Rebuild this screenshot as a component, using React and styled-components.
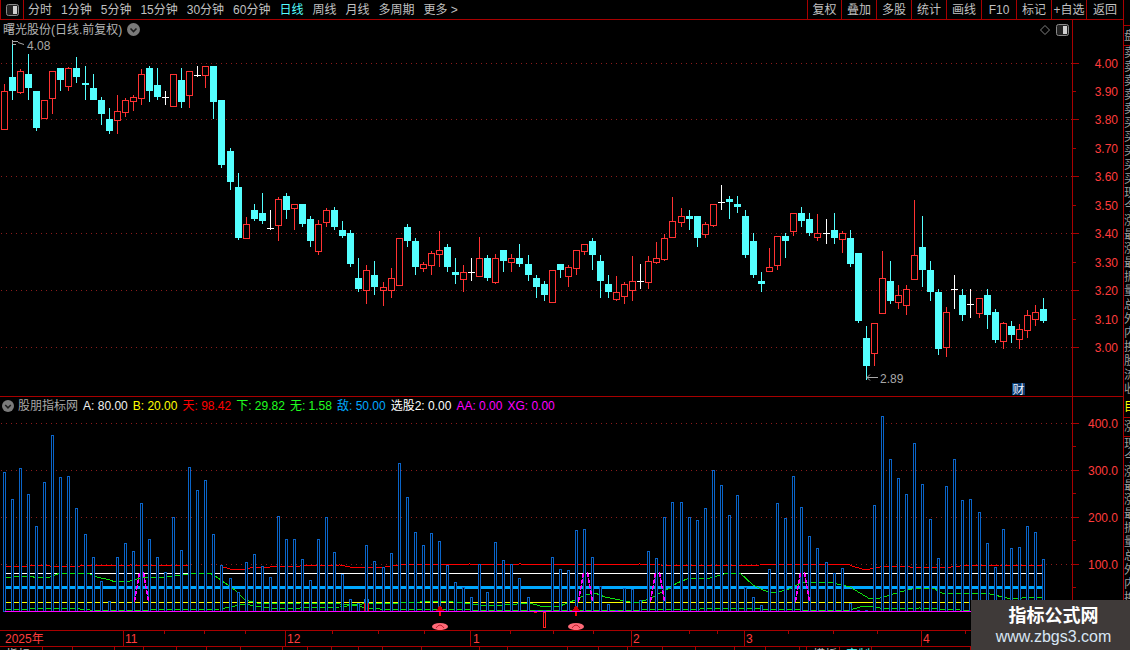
import React from "react";
import styled, { createGlobalStyle } from "styled-components";

const LINE = "#a80000";
const AXIS_RED = "#ff3c3c";

// t, high, bodyTop, bodyBottom, low (all in page pixels)
const candles = [
  ["r",84,91,129,129],["c",40,77,91,100],["r",69,71,92,94],["c",54,74,88,100],["c",91,91,128,131],
  ["r",100,100,118,119],["r",71,71,98,114],["c",68,68,80,91],["r",67,68,86,91],["c",57,68,77,83],
  ["c",66,83,85,100],["c",74,88,100,100],["c",97,100,114,125],["c",108,119,131,134],["r",95,111,120,134],
  ["r",98,100,112,117],["r",95,97,101,111],["r",69,74,98,105],["c",66,68,91,102],["c",68,85,97,100],
  ["w",91,97,97,105],["r",74,74,106,106],["c",68,80,102,108],["r",71,71,95,108],["w",66,75,75,77],
  ["r",66,66,75,88],["c",66,66,102,119],["c",100,100,165,168],["c",148,151,182,190],["c",173,187,238,240],
  ["r",217,224,238,239],["c",204,210,219,221],["c",193,213,221,224],["w",210,228,228,230],["r",197,199,225,241],
  ["c",193,196,210,219],["r",204,204,208,230],["c",204,204,224,227],["c",216,219,241,247],["r",220,224,251,255],
  ["r",208,210,222,227],["c",207,210,227,230],["c",221,230,236,238],["c",230,233,264,267],["c",258,278,289,292],
  ["r",265,270,290,304],["c",261,275,287,295],["r",282,287,290,306],["r",268,278,290,298],["r",238,238,285,285],
  ["c",224,227,241,247],["c",238,241,267,275],["r",262,264,268,272],["r",251,253,265,275],["r",231,250,254,267],
  ["c",244,247,267,272],["c",258,272,275,284],["r",265,272,279,292],["w",258,272,272,281],["r",237,258,276,276],
  ["c",255,258,278,281],["r",254,258,282,284],["c",250,250,261,272],["r",254,258,262,272],["c",244,258,264,267],
  ["c",255,264,275,281],["c",275,278,287,298],["c",281,284,295,301],["r",270,270,302,302],["c",264,264,270,278],
  ["r",265,267,276,287],["r",250,250,268,275],["r",244,244,251,255],["c",238,241,255,270],["c",255,261,281,298],
  ["c",275,284,292,298],["r",276,292,299,301],["r",282,284,296,304],["r",256,281,290,301],["w",264,281,281,289],
  ["r",256,261,282,289],["r",242,258,262,264],["r",234,238,259,261],["r",197,221,237,238],["r",208,216,222,227],
  ["c",210,216,219,230],["c",216,216,238,247],["r",222,224,234,238],["r",204,204,225,227],["w",185,202,202,210],
  ["c",196,199,202,219],["c",196,204,207,213],["c",210,216,255,258],["c",233,241,275,278],["c",272,281,284,292],
  ["r",248,267,271,272],["r",236,236,265,270],["c",233,236,241,258],["r",213,213,231,236],["c",207,213,221,227],
  ["c",213,219,233,236],["r",214,233,237,241],["w",219,233,233,244],["c",213,230,238,244],["r",231,233,239,253],
  ["c",230,238,264,267],["c",253,253,321,323],["c",326,338,366,380],["r",323,323,353,366],["r",251,278,313,313],
  ["c",261,281,301,304],["r",285,295,302,309],["r",285,289,305,315],["r",200,255,279,279],["c",216,247,270,287],
  ["c",261,270,292,301],["c",289,292,349,355],["r",307,312,347,357],["w",275,289,289,309],["c",289,295,315,321],
  ["w",289,304,304,318],["r",298,298,313,318],["c",289,295,315,329],["c",309,312,340,343],["r",322,323,341,349],
  ["c",321,326,335,343],["r",324,329,339,349],["r",310,315,330,338],["r",305,312,319,326],["c",298,309,321,323],
];

const barTops = [
  472,499,468,494,526,482,435,477,476,508,534,557,581,601,557,543,551,503,539,557,572,517,550,467,490,480,534,565,578,592,
  562,554,566,577,516,539,539,559,580,539,517,552,574,599,603,545,561,567,553,463,497,532,545,533,541,565,582,587,597,564,
  592,542,560,564,578,597,610,610,557,569,570,530,529,557,586,604,610,588,589,600,551,558,517,502,502,517,520,508,470,485,
  515,495,587,597,605,569,503,518,476,507,536,548,562,573,568,603,610,610,505,416,459,478,494,443,484,519,558,486,459,500,
  499,512,543,567,529,548,547,526,532,559,
];

const upperGreen = [
  [6,578],[13,577],[30,576],[37,578],[50,577],[60,573],[90,574],[97,577],[110,580],[115,582],[130,581],[140,578],[150,577],
  [165,577],[190,574],[210,573],[218,578],[225,583],[235,590],[245,600],[257,603],[300,603],[340,604],[355,605],[370,603],
  [400,603],[440,601],[465,603],[470,604],[490,606],[530,603],[540,606],[560,606],[575,600],[585,595],[595,593],[605,597],
  [620,600],[635,603],[650,599],[660,593],[670,588],[677,583],[687,579],[710,578],[727,573],[740,573],[753,585],[763,590],
  [773,593],[787,590],[803,582],[818,582],[833,583],[850,587],[860,593],[870,599],[880,598],[890,595],[900,592],[912,589],
  [933,588],[942,593],[957,594],[977,593],[990,594],[1007,598],[1017,599],[1027,597],[1043,597],
];

const lowerGreen = [
  [6,609],[30,609],[50,608],[80,609],[90,610],[110,610],[150,610],[220,609],[235,606],[245,604],[255,606],[270,608],
  [300,608],[340,607],[355,605],[365,608],[380,609],[410,610],[440,609],[470,610],[520,610],[560,610],[600,610],[640,610],
  [665,609],[700,609],[720,608],[760,609],[800,610],[830,610],[850,610],[860,607],[870,606],[885,609],[920,608],[960,610],
  [1000,610],[1043,610],
];

const redLine = [
  [6,566],[20,566],[24,567],[35,565],[50,566],[80,566],[90,565],[100,566],[130,565],[190,566],[220,566],[230,569],[240,570],
  [250,568],[270,567],[300,566],[340,565],[350,567],[360,568],[385,567],[400,565],[470,564],[480,565],[520,564],[560,565],
  [640,564],[660,565],[700,566],[760,565],[803,564],[847,564],[855,567],[866,570],[875,568],[885,566],[910,567],[935,567],
  [942,568],[960,566],[1000,565],[1043,565],
];

const pulses = [134, 578, 650, 795];
const gridPrice = [63, 119, 176, 233, 290, 347];
const gridIndicator = [423, 470, 517, 564];

const priceLabels = [
  ["4.00",63],["3.90",91],["3.80",119],["3.70",148],["3.60",176],["3.50",205],["3.40",233],["3.30",262],["3.20",290],["3.10",319],["3.00",347],
];
const indicatorLabels = [["400.0",423],["300.0",470],["200.0",517],["100.0",564]];

const periods = ["分时","1分钟","5分钟","15分钟","30分钟","60分钟","日线","周线","月线","多周期","更多 >"];
const tools = [["复权",34],["叠加",35],["多股",35],["统计",35],["画线",35],["F10",35],["标记",35],["+自选",35],["返回",37]];

const legend = [
  ["A:","80.00","#f0f0f0"],["B:","20.00","#ffff00"],["天:","98.42","#ff0000"],["下:","29.82","#20ff20"],["无:","1.58","#20ff20"],
  ["敌:","50.00","#00a8ff"],["选股2:","0.00","#ffffff"],["AA:","0.00","#ff00ff"],["XG:","0.00","#ff00ff"],
];

const months = [["2025年",0,5],["11",123,125],["12",285,287],["1",470,473],["2",631,633],["3",744,746],["4",921,923]];
const minorTicks = [164,204,245,332,378,424,510,553,593,689,717,788,833,877,965,1005];
const tabWidths = [43,30,42,29,33,30,34,42,25,24,27,24,39,58,28,60,31,29,35,33,39,31,34,7,33,32,99];
const tabNames = { 0: "指标", 24: "模板", 25: "定制" };

const sideTop = ["卖五","卖四","卖三","卖二","卖一","买一","买二","买三","买四","买五","现价","今开","涨跌","最高","涨幅","最低","振幅","量比","总量","外盘","内盘","换手","股本","流通","收益"];
const sideBottom = ["现价","今开","涨跌","最高","涨幅","最低","振幅","量比","总量","外盘","内盘","换手","股本","流通","收益"];

const GlobalStyle = createGlobalStyle`
  html, body {
    margin: 0;
    background: #000;
  }
  body {
    font-family: "Liberation Sans", "Noto Sans CJK SC", sans-serif;
    font-size: 12px;
  }
`;

const Frame = styled.div`
  position: relative;
  display: flex;
  width: 1130px;
  height: 650px;
  overflow: hidden;
  background: #000;
`;

const Main = styled.div`
  display: flex;
  flex-direction: column;
  width: 1124px;
  height: 650px;
  border-right: 1px solid ${LINE};
  box-sizing: border-box;
`;

const Toolbar = styled.div`
  display: flex;
  align-items: center;
  height: 20px;
  flex: none;
  box-sizing: border-box;
  border-bottom: 1px solid ${LINE};
`;

const IconBox = styled.div`
  display: flex;
  align-items: center;
  justify-content: center;
  width: 24px;
  height: 19px;
  box-sizing: border-box;
  border-left: 1px solid ${LINE};
  border-right: 1px solid ${LINE};
`;

const Periods = styled.div`
  display: flex;
  gap: 9px;
  padding-left: 4px;
`;

const Period = styled.span`
  color: ${(p) => (p.$active ? "#54ffff" : "#c0c0c0")};
  white-space: pre;
  height: 19px;
  line-height: 21px;
`;

const Tools = styled.div`
  display: flex;
  margin-left: auto;
`;

const Tool = styled.div`
  width: ${(p) => p.$w}px;
  height: 19px;
  line-height: 21px;
  box-sizing: border-box;
  border-left: 1px solid ${LINE};
  color: #c0c0c0;
  text-align: center;
  white-space: nowrap;
`;

const Pane = styled.div`
  display: flex;
  flex: none;
  height: ${(p) => p.$h}px;
  box-sizing: border-box;
  border-bottom: ${(p) => (p.$ruled ? `1px solid ${LINE}` : "none")};
`;

const ChartColumn = styled.div`
  display: flex;
  flex-direction: column;
  width: 1072px;
`;

const PaneHeader = styled.div`
  display: flex;
  align-items: center;
  flex: none;
  height: ${(p) => p.$h}px;
  padding-left: ${(p) => p.$pad}px;
  padding-right: 3px;
`;

const StockTitle = styled.span`
  color: #b4b4b4;
  line-height: 16px;
  margin-right: 5px;
`;

const IndicatorTitle = styled.span`
  color: #a8a8a8;
  line-height: 16px;
  margin: 0 5px 0 4px;
`;

const HeaderRight = styled.div`
  display: flex;
  align-items: center;
  gap: 6px;
  margin-left: auto;
`;

const Legend = styled.div`
  display: flex;
  gap: 5px;
`;

const LegendItem = styled.span`
  color: ${(p) => p.$color};
  white-space: pre;
  line-height: 16px;
`;

const ChartSvg = styled.svg`
  display: block;
  flex: none;
  shape-rendering: crispEdges;
`;

const ChartNote = styled.text`
  fill: ${(p) => p.$fill || "#a8a8a8"};
  font-family: "Liberation Sans", "Noto Sans CJK SC", sans-serif;
  font-size: 12px;
`;

const Axis = styled.div`
  position: relative;
  width: 51px;
  box-sizing: border-box;
  border-left: 1px solid ${LINE};
`;

const AxisTick = styled.i`
  position: absolute;
  left: 0;
  top: ${(p) => p.$y}px;
  width: ${(p) => (p.$long ? 6 : 3)}px;
  height: 1px;
  background: ${LINE};
`;

const AxisLabel = styled.span`
  position: absolute;
  right: 5px;
  top: ${(p) => p.$y - 6}px;
  line-height: 14px;
  color: ${AXIS_RED};
`;

const TimeAxis = styled.div`
  position: relative;
  flex: none;
  height: 17px;
  box-sizing: border-box;
  border-top: 1px solid ${LINE};
  border-bottom: 1px solid ${LINE};
`;

const TimeTick = styled.i`
  position: absolute;
  left: ${(p) => p.$x}px;
  top: 0;
  width: 1px;
  height: ${(p) => (p.$major ? 15 : 3)}px;
  background: ${LINE};
`;

const MonthLabel = styled.span`
  position: absolute;
  left: ${(p) => p.$x}px;
  top: 1px;
  line-height: 14px;
  color: ${AXIS_RED};
`;

const TabRow = styled.div`
  display: flex;
  flex: 1;
  overflow: hidden;
`;

const Tab = styled.div`
  width: ${(p) => p.$w}px;
  flex: none;
  box-sizing: border-box;
  border-right: 1px solid ${LINE};
  padding: 1px 0 0 ${(p) => (p.$w < 10 ? 0 : 6)}px;
  line-height: 14px;
  color: ${(p) => (p.$active ? "#54ffff" : "#c0c0c0")};
  white-space: nowrap;
  overflow: hidden;
`;

const SidePeek = styled.div`
  flex: 1;
  overflow: hidden;
  display: flex;
  flex-direction: column;
`;

const SideCell = styled.div`
  flex: none;
  height: ${(p) => p.$h}px;
  box-sizing: border-box;
  border-bottom: ${(p) => (p.$ruled ? `1px solid ${LINE}` : "none")};
  color: ${(p) => p.$color || "#9c9c9c"};
  line-height: ${(p) => p.$h}px;
  white-space: nowrap;
`;

const SideRows = styled.div`
  flex: none;
  height: ${(p) => p.$h}px;
  overflow: hidden;
  color: #9c9c9c;
`;

const SideRow = styled.div`
  height: 14px;
  line-height: 14px;
  white-space: nowrap;
`;

const Watermark = styled.div`
  position: absolute;
  right: 0;
  bottom: 0;
  width: 159px;
  height: 50px;
  background: #3f3a39;
  display: flex;
  flex-direction: column;
  align-items: center;
  padding-left: 6px;
  box-sizing: border-box;
`;

const MarkTitle = styled.div`
  margin-top: 5px;
  color: #fff;
  font-size: 18px;
  line-height: 22px;
  font-weight: 700;
`;

const MarkUrl = styled.div`
  color: #d8e6f4;
  font-size: 16px;
  line-height: 20px;
`;

function LayoutIcon() {
  return (
    <svg width="13" height="12" viewBox="0 0 13 12">
      <rect x="0.5" y="0.5" width="12" height="11" rx="2" fill="#222" stroke="#8a8a8a" />
      <rect x="7" y="2" width="4" height="8" fill="#d0d0d0" />
    </svg>
  );
}

function MenuDot({ size }) {
  return (
    <svg width={size} height={size} viewBox="0 0 13 13">
      <circle cx="6.5" cy="6.5" r="6.5" fill="#7a7a7a" />
      <path d="M3.5 5.5 L6.5 8.5 L9.5 5.5" fill="none" stroke="#1c1c1c" strokeWidth="1.6" />
    </svg>
  );
}

function Grid({ rows }) {
  return rows.map((y) => (
    <line key={y} x1="1" x2="1072" y1={y + 0.5} y2={y + 0.5} stroke="#8c1c1c" strokeDasharray="1 4" />
  ));
}

const barX = (i) => Math.round(4 + i * 8.054);
const toPoints = (pts) => pts.map((p) => p.join(",")).join(" ");

function Candle({ data, i }) {
  const [t, high, top, bottom, low] = data;
  const x = barX(i);
  const color = t === "r" ? "#ff3232" : t === "c" ? "#54ffff" : "#ffffff";
  return (
    <g>
      <line x1={x + 0.5} x2={x + 0.5} y1={high} y2={low} stroke={color} />
      {t === "w" ? (
        <line x1={x - 3} x2={x + 4} y1={top + 0.5} y2={top + 0.5} stroke={color} />
      ) : t === "c" ? (
        <rect x={x - 3} y={top} width="7" height={Math.max(bottom - top, 1)} fill={color} />
      ) : (
        <rect x={x - 2.5} y={top + 0.5} width="6" height={bottom - top} fill="#000" stroke={color} />
      )}
    </g>
  );
}

function PriceChart() {
  return (
    <ChartSvg width="1072" height="357" viewBox="0 39 1072 357">
      <Grid rows={gridPrice} />
      {candles.map((c, i) => (
        <Candle key={i} data={c} i={i} />
      ))}
      <path d="M12.5 40 V44 M12.5 41.5 H18 M12.5 44.5 H16 M18 42.5 L24 44.5" fill="none" stroke="#a8a8a8" shapeRendering="auto" />
      <ChartNote x="27" y="50">4.08</ChartNote>
      <path d="M866.5 377.5 H878 M870 374.5 L867 377.5 L870 380.5" fill="none" stroke="#a8a8a8" shapeRendering="auto" />
      <ChartNote x="880" y="383">2.89</ChartNote>
      <rect x="1012" y="383" width="13" height="12" fill="#0a3a6e" />
      <ChartNote x="1012.5" y="393.5" $fill="#e8f0ff">财</ChartNote>
    </ChartSvg>
  );
}

function Pulse({ x }) {
  return (
    <path
      d={`M${x + 0.5} 602 L${x + 2} 592 L${x + 4} 582 L${x + 5.5} 572 M${x + 9.5} 572 L${x + 11} 582 L${x + 13} 592 L${x + 14.5} 602`}
      fill="none"
      stroke="#ff00ff"
      strokeWidth="1.5"
      strokeDasharray="5 1"
    />
  );
}

function Hat({ x }) {
  return (
    <g shapeRendering="auto">
      <ellipse cx={x} cy="626.5" rx="8" ry="3.6" fill="#ff6a78" />
      <path d={`M${x - 4} 628 Q${x} 622 ${x + 4} 628`} fill="none" stroke="#c02030" />
    </g>
  );
}

function IndicatorChart() {
  return (
    <ChartSvg width="1072" height="216" viewBox="0 414 1072 216">
      <Grid rows={gridIndicator} />
      <polyline points={toPoints(redLine)} fill="none" stroke="#ff0000" strokeWidth="1" />
      <line x1="6" x2="1043" y1="573.5" y2="573.5" stroke="#ffffff" />
      <line x1="6" x2="1043" y1="602.5" y2="602.5" stroke="#ffff00" />
      <line x1="6" x2="1043" y1="587.5" y2="587.5" stroke="#00a8ff" strokeWidth="3" />
      <polyline points={toPoints(upperGreen)} fill="none" stroke="#10e010" strokeWidth="1" />
      <polyline points={toPoints(lowerGreen)} fill="none" stroke="#10e010" strokeWidth="1" />
      <rect x="364" y="599" width="5" height="12" fill="#0a78dc" />
      <rect x="365" y="603" width="3" height="8" fill="#000" />
      <path d="M364.5 603 V611 M368.5 603 V611" stroke="#ff0000" />
      {barTops.map((top, i) => (
        <rect key={i} x={barX(i) - 0.5} y={top + 0.5} width="2" height={611 - top} fill="#000" stroke="#0a64c8" />
      ))}
      {pulses.map((x) => (
        <Pulse key={x} x={x} />
      ))}
      <line x1="5" x2="1043" y1="611.5" y2="611.5" stroke="#ff00ff" />
      {[440, 576].map((x) => (
        <g key={x}>
          <polygon points={`${x - 4},611 ${x},605 ${x + 4},611`} fill="#c80000" />
          <rect x={x - 1} y="612" width="2" height="4" fill="#ff0000" />
        </g>
      ))}
      <rect x="534" y="612" width="3" height="1" fill="#ff0000" />
      <rect x="543.5" y="612.5" width="2" height="15" fill="none" stroke="#ff2020" />
      <Hat x={440} />
      <Hat x={576} />
    </ChartSvg>
  );
}

export default function App() {
  return (
    <Frame>
      <GlobalStyle />
      <Main>
        <Toolbar>
          <IconBox>
            <LayoutIcon />
          </IconBox>
          <Periods>
            {periods.map((name) => (
              <Period key={name} $active={name === "日线"}>{name}</Period>
            ))}
          </Periods>
          <Tools>
            {tools.map(([name, w]) => (
              <Tool key={name} $w={w}>{name}</Tool>
            ))}
          </Tools>
        </Toolbar>

        <Pane $h={377} $ruled>
          <ChartColumn>
            <PaneHeader $h={19} $pad={3}>
              <StockTitle>曙光股份(日线.前复权)</StockTitle>
              <MenuDot size={13} />
              <HeaderRight>
                <svg width="10" height="10" viewBox="0 0 10 10">
                  <path d="M5 0.5 L9.5 5 L5 9.5 L0.5 5 Z" fill="none" stroke="#808080" />
                </svg>
                <LayoutIcon />
              </HeaderRight>
            </PaneHeader>
            <PriceChart />
          </ChartColumn>
          <Axis>
            {priceLabels.map(([text, y], i) => (
              <React.Fragment key={text}>
                <AxisTick $y={y - 20} $long={i % 2 === 0} />
                <AxisLabel $y={y - 20}>{text}</AxisLabel>
              </React.Fragment>
            ))}
          </Axis>
        </Pane>

        <Pane $h={233}>
          <ChartColumn>
            <PaneHeader $h={17} $pad={2}>
              <MenuDot size={12} />
              <IndicatorTitle>股朋指标网</IndicatorTitle>
              <Legend>
                {legend.map(([label, value, color]) => (
                  <LegendItem key={label} $color={color}>{label} {value}</LegendItem>
                ))}
              </Legend>
            </PaneHeader>
            <IndicatorChart />
          </ChartColumn>
          <Axis>
            {indicatorLabels.map(([text, y]) => (
              <React.Fragment key={text}>
                <AxisTick $y={y - 397} $long />
                <AxisTick $y={y - 397 + 23} />
                <AxisLabel $y={y - 397}>{text}</AxisLabel>
              </React.Fragment>
            ))}
          </Axis>
        </Pane>

        <TimeAxis>
          {months.map(([text, tick, x]) => (
            <React.Fragment key={text}>
              {tick > 0 && <TimeTick $x={tick} $major />}
              <MonthLabel $x={x}>{text}</MonthLabel>
            </React.Fragment>
          ))}
          {minorTicks.map((x) => (
            <TimeTick key={x} $x={x} />
          ))}
        </TimeAxis>

        <TabRow>
          {tabWidths.map((w, i) => (
            <Tab key={i} $w={w} $active={i === 25}>{tabNames[i]}</Tab>
          ))}
        </TabRow>
      </Main>

      <SidePeek>
        <SideCell $h={26} $ruled />
        <SideCell $h={20} $ruled>盘口</SideCell>
        <SideRows $h={351}>
          {sideTop.map((name, i) => (
            <SideRow key={i}>{name}</SideRow>
          ))}
        </SideRows>
        <SideCell $h={21} $ruled $color="#ffff00">目录</SideCell>
        <SideCell $h={19} $ruled>涨跌</SideCell>
        <SideRows $h={213}>
          {sideBottom.map((name, i) => (
            <SideRow key={i}>{name}</SideRow>
          ))}
        </SideRows>
      </SidePeek>

      <Watermark>
        <MarkTitle>指标公式网</MarkTitle>
        <MarkUrl>www.zbgs3.com</MarkUrl>
      </Watermark>
    </Frame>
  );
}
